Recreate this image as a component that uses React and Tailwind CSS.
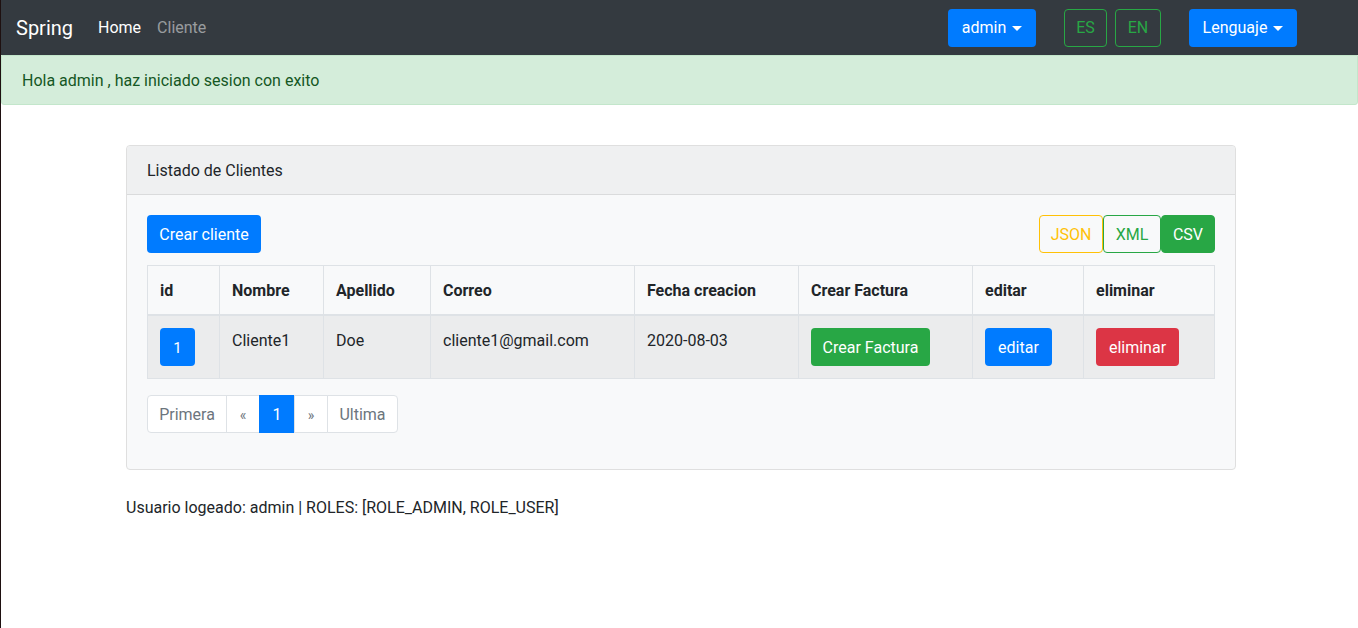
export default function App() {
  const font = { fontFamily: 'Roboto, "Noto Sans", "Liberation Sans", sans-serif' };
  const cols = [72, 104, 107, 204, 164, 174, 111, 131];
  const heads = ["id", "Nombre", "Apellido", "Correo", "Fecha creacion", "Crear Factura", "editar", "eliminar"];
  return (
    <div className="min-h-[628px] bg-white border-l border-[#1e1010] text-[16px] leading-6 text-[#212529]" style={font}>
      {/* Navbar */}
      <nav className="h-[55px] bg-[#343a40] flex items-center pl-[15px] pr-[61px]">
        <span className="text-[20px] leading-[30px] text-white mr-[17px] pt-px">Spring</span>
        <span className="px-2 text-white pt-px">Home</span>
        <span className="px-2 text-white/50 pt-px">Cliente</span>
        <div className="ml-auto flex items-center">
          <button className="h-[38px] w-[88px] rounded bg-[#007bff] text-white flex items-center justify-center gap-[6px] pt-px">
            admin
            <span className="inline-block w-0 h-0 border-t-[5px] border-t-white border-x-[5px] border-x-transparent"></span>
          </button>
          <button className="ml-[28px] h-[38px] w-[43px] rounded border border-[#28a745] text-[#28a745] flex items-center justify-center pt-px">ES</button>
          <button className="ml-[8px] h-[38px] w-[46px] rounded border border-[#28a745] text-[#28a745] flex items-center justify-center pt-px">EN</button>
          <button className="ml-[28px] h-[38px] w-[108px] rounded bg-[#007bff] text-white flex items-center justify-center gap-[6px] pt-px">
            Lenguaje
            <span className="inline-block w-0 h-0 border-t-[5px] border-t-white border-x-[5px] border-x-transparent"></span>
          </button>
        </div>
      </nav>

      {/* Alert */}
      <div className="h-[50px] bg-[#d4edda] border border-[#c3e6cb] rounded-b-[3px] text-[#155724] px-5 flex items-center pt-px">
        Hola admin , haz iniciado sesion con exito
      </div>

      {/* Container */}
      <div className="w-[1110px] ml-[125px] pt-[40px]">
        <div className="border border-[#dfdfdf] rounded bg-[#f8f9fa]">
          <div className="h-[49px] bg-[#eff0f1] border-b border-[#dadbdc] px-5 flex items-center rounded-t pt-px">
            Listado de Clientes
          </div>
          <div className="p-5 pb-[36px]">
            <div className="flex items-start justify-between">
              <button className="h-[38px] w-[114px] rounded bg-[#007bff] text-white pt-px">Crear cliente</button>
              <div className="flex">
                <button className="h-[38px] w-[64px] rounded border border-[#ffc107] text-[#ffc107] pt-px">JSON</button>
                <button className="h-[38px] w-[58px] rounded border border-[#28a745] text-[#28a745] pt-px">XML</button>
                <button className="h-[38px] w-[54px] rounded border border-[#28a745] bg-[#28a745] text-white pt-px">CSV</button>
              </div>
            </div>

            <table className="mt-[12px] border-collapse table-fixed w-[1067px]">
              <colgroup>
                {cols.map((w, i) => (
                  <col key={i} style={{ width: w }} />
                ))}
              </colgroup>
              <thead>
                <tr>
                  {heads.map((h) => (
                    <th key={h} className="border border-[#dee2e6] border-b-2 text-left font-bold px-3 pt-[13px] pb-[11px] align-bottom">
                      {h}
                    </th>
                  ))}
                </tr>
              </thead>
              <tbody>
                <tr className="bg-[#ebeced]">
                  <td className="border border-[#dee2e6] p-3 align-top">
                    <button className="h-[38px] w-[35px] rounded bg-[#007bff] text-white text-[15px] pt-px">1</button>
                  </td>
                  <td className="border border-[#dee2e6] pt-[13px] pb-[11px] px-3 align-top">Cliente1</td>
                  <td className="border border-[#dee2e6] pt-[13px] pb-[11px] px-3 align-top">Doe</td>
                  <td className="border border-[#dee2e6] pt-[13px] pb-[11px] px-3 align-top">cliente1@gmail.com</td>
                  <td className="border border-[#dee2e6] pt-[13px] pb-[11px] px-3 align-top">2020-08-03</td>
                  <td className="border border-[#dee2e6] p-3 align-top">
                    <button className="h-[38px] w-[119px] rounded bg-[#28a745] text-white pt-px">Crear Factura</button>
                  </td>
                  <td className="border border-[#dee2e6] p-3 align-top">
                    <button className="h-[38px] w-[67px] rounded bg-[#007bff] text-white pt-px">editar</button>
                  </td>
                  <td className="border border-[#dee2e6] p-3 align-top">
                    <button className="h-[38px] w-[83px] rounded bg-[#dc3545] text-white pt-px">eliminar</button>
                  </td>
                </tr>
              </tbody>
            </table>

            <div className="mt-4 flex">
              <span className="h-[38px] w-[80px] flex items-center justify-center bg-white border border-[#dee2e6] rounded-l text-[#6c757d] pt-px">Primera</span>
              <span className="-ml-px h-[38px] w-[34px] flex items-center justify-center bg-white border border-[#dee2e6] text-[#6c757d] text-[14px] pt-px">«</span>
              <span className="-ml-px h-[38px] w-[36px] flex items-center justify-center bg-[#007bff] border border-[#007bff] text-white pt-px">1</span>
              <span className="-ml-px h-[38px] w-[34px] flex items-center justify-center bg-white border border-[#dee2e6] text-[#6c757d] text-[14px] pt-px">»</span>
              <span className="-ml-px h-[38px] w-[71px] flex items-center justify-center bg-white border border-[#dee2e6] rounded-r text-[#6c757d] pt-px">Ultima</span>
            </div>
          </div>
        </div>

        <p className="mt-[26px]">Usuario logeado: admin | ROLES: [ROLE_ADMIN, ROLE_USER]</p>
      </div>
    </div>
  );
}
